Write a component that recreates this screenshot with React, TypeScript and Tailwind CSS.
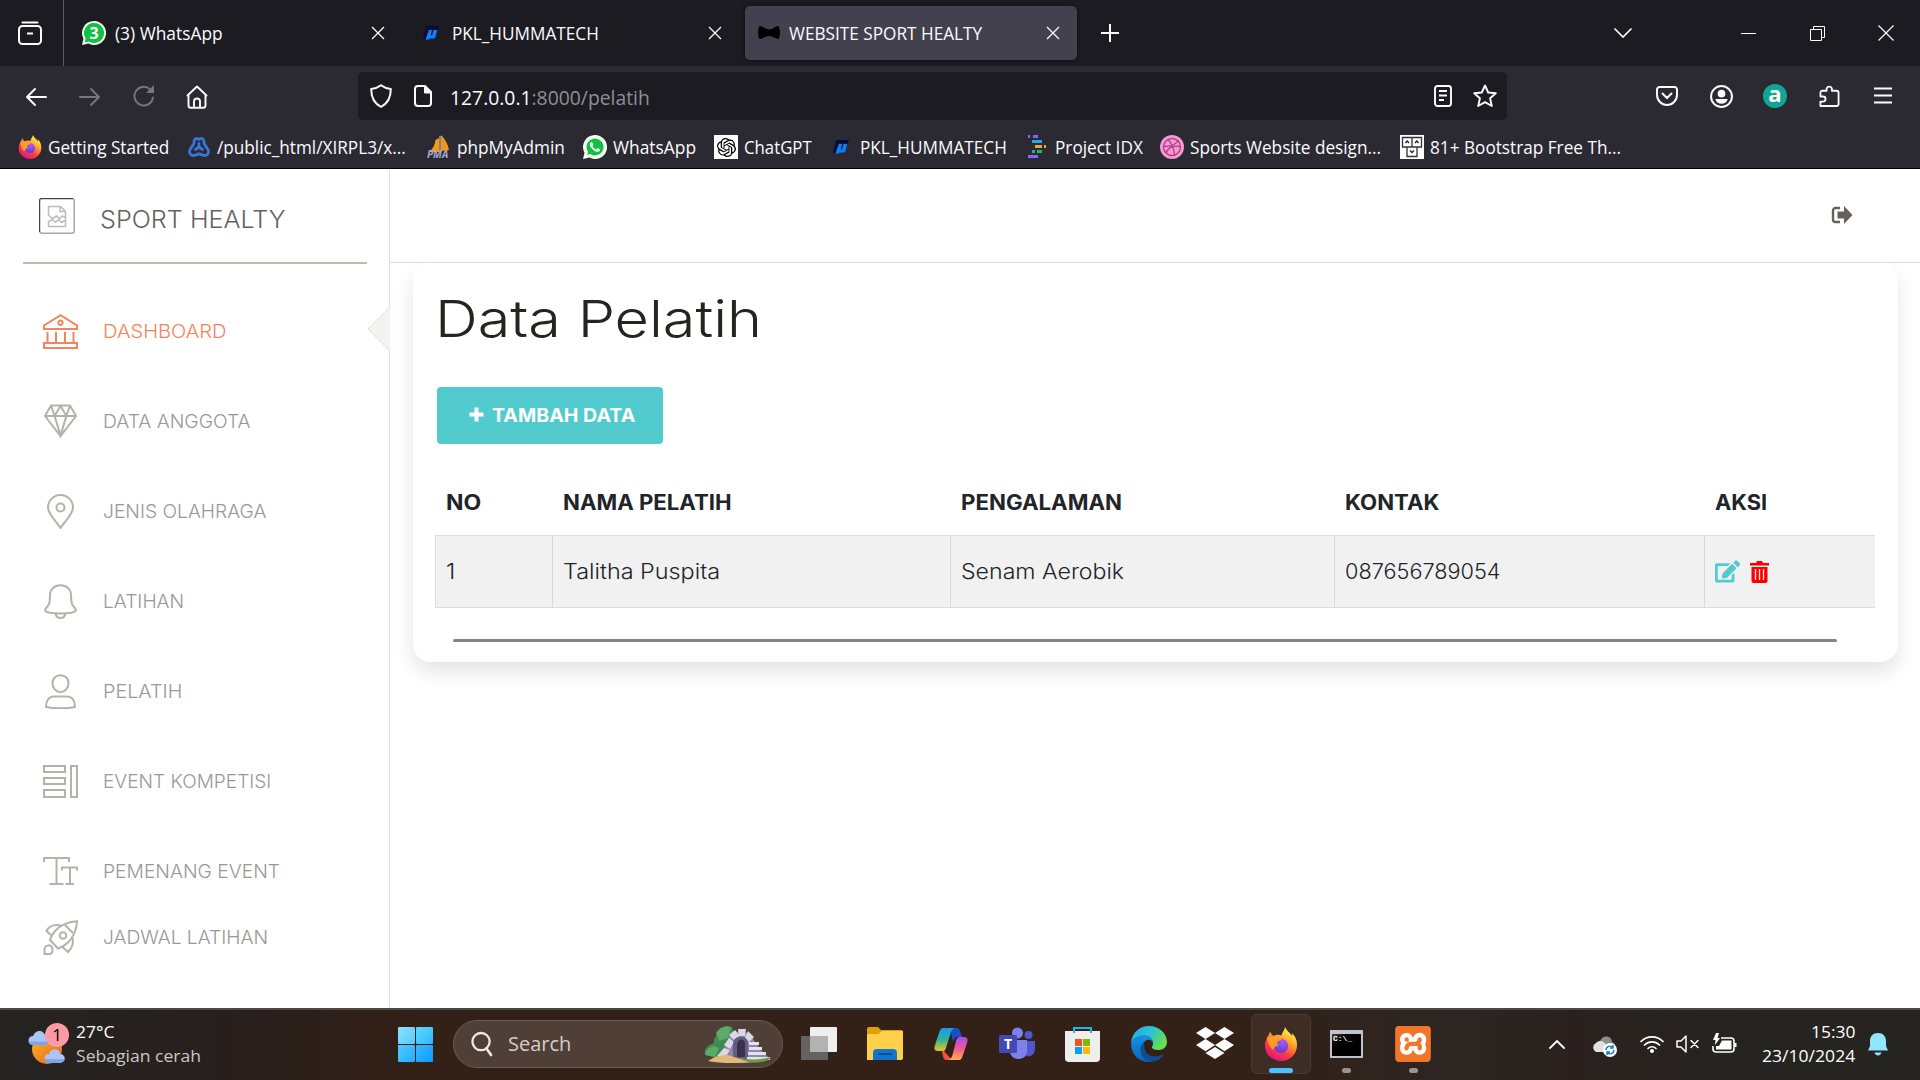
import React, { useLayoutEffect, useRef, useState } from "react";
import { FaEdit, FaDropbox, FaWhatsapp } from "react-icons/fa";
import { SiOpenai, SiXampp } from "react-icons/si";

/* Text that stretches or condenses to fill the width of its box. */
function Fit({ className = "", children }: { className?: string; children: React.ReactNode }) {
  const box = useRef<HTMLSpanElement>(null);
  const inner = useRef<HTMLSpanElement>(null);
  const [k, setK] = useState(1);
  useLayoutEffect(() => {
    if (box.current && inner.current) setK(box.current.clientWidth / inner.current.offsetWidth);
  }, []);
  return (
    <span ref={box} className={`block shrink-0 whitespace-nowrap ${className}`}>
      <span ref={inner} className="inline-block origin-left" style={{ transform: `scaleX(${k})` }}>
        {children}
      </span>
    </span>
  );
}

function Svg({ vb, className = "", children }: { vb: string; className?: string; children: React.ReactNode }) {
  return (
    <svg viewBox={vb} fill="none" className={`block shrink-0 ${className}`}>
      {children}
    </svg>
  );
}

const Cross = ({ className = "" }: { className?: string }) => (
  <Svg vb="0 0 14 14" className={`h-[14px] w-[14px] ${className}`}>
    <path d="M1 1l12 12M13 1L1 13" stroke="#fbfbfe" strokeWidth="1.3" />
  </Svg>
);

const WhatsAppBadge = ({ n, className = "" }: { n?: string; className?: string }) => (
  <span className={`relative block h-6 w-6 shrink-0 ${className}`}>
    <Svg vb="0 0 24 24" className="h-6 w-6">
      <path d="M12 0a12 12 0 1 1-5.6 22.6L0 24l1.5-6.2A12 12 0 0 1 12 0z" fill="#f4fff4" />
      <path d="M12 2a10 10 0 1 1-5.2 18.5L2.6 21.500l1.100-4A10 10 0 0 1 12 2z" fill="#12c143" />
    </Svg>
    {n ? (
      <span className="absolute inset-0 text-center text-[16px] font-bold leading-6 text-white">{n}</span>
    ) : (
      <FaWhatsapp className="absolute inset-0 h-6 w-6 scale-[0.98] text-white" />
    )}
  </span>
);

const Humma = ({ className = "" }: { className?: string }) => (
  <Svg vb="0 0 16 14" className={`h-[14px] w-4 ${className}`}>
    <path d="M3 0h13l-1.200 3.500H5L3 13H0z" fill="#050b3c" />
    <path d="M6 4h3L7.600 9.500h1.500L10.600 4h3.600l-1.600 6.500c-.4 1.500-1 2-2.500 2H6.500l-.3 1H2.500z" fill="#0a80ff" />
  </Svg>
);

const Firefox = ({ className = "" }: { className?: string }) => (
  <Svg vb="0 0 36 36" className={className}>
    <defs>
      <linearGradient id="fx" x1="28" y1="3" x2="9" y2="34" gradientUnits="userSpaceOnUse">
        <stop stopColor="#fff44f" />
        <stop offset=".35" stopColor="#ffa02b" />
        <stop offset=".65" stopColor="#ff4040" />
        <stop offset="1" stopColor="#e4117f" />
      </linearGradient>
      <radialGradient id="fxg" cx=".6" cy=".2" r=".9">
        <stop stopColor="#a758ff" />
        <stop offset="1" stopColor="#5b38c9" />
      </radialGradient>
    </defs>
    <path d="M22.500 0c-1 4-3.500 6-4 9-3-1-6-1-8 .5C8.500 8.500 7 7 7 5 5 6.500 4.500 8.500 4.500 10 2 13 1 16 1 19.500 1 28.500 8.500 36 18 36s17-7.500 17-17c0-5-2-10-5.500-12.500l.5 3.500C28 6 23.500 4 22.500 0z" fill="url(#fx)" />
    <circle cx="18" cy="20" r="7.500" fill="url(#fxg)" />
    <path d="M3 10c4 1 6-1.500 10 0 2.500 1 4.500 2 6 2.500-1 2.500-5 2-5 4.500 0 1.500 1.500 2.500 1 3-2 0-5 .5-4.500 4.500C5 22 4 15 3 10z" fill="#ff9a28" />
  </Svg>
);

/* ---------- browser chrome ---------- */

function TabStrip() {
  return (
    <div className="flex h-[66px] items-center bg-[#1c1b22] text-[18px] text-[#fbfbfe]">
      <Svg vb="0 0 24 24" className="ml-[18px] h-6 w-6">
        <path d="M4.500 1.500h15" stroke="#fbfbfe" strokeWidth="2" strokeLinecap="round" />
        <rect x="1" y="5" width="22" height="18" rx="3.500" stroke="#fbfbfe" strokeWidth="2" />
        <path d="M9 12.500h6" stroke="#fbfbfe" strokeWidth="2" />
      </Svg>
      <div className="ml-[21px] h-full w-px bg-[#5b5a61]" />
      <WhatsAppBadge n="3" className="ml-[18px]" />
      <Fit className="ml-[9px] w-[108px]">(3) WhatsApp</Fit>
      <Cross className="ml-[148px]" />
      <Humma className="ml-[38px]" />
      <Fit className="ml-[13px] w-[147px]">PKL_HUMMATECH</Fit>
      <Cross className="ml-[109px]" />
      <div className="ml-[23px] flex h-[54px] w-[332px] items-center rounded-[5px] bg-[#42414d] shadow-[0_0_4px_rgba(0,0,0,.6)]">
        <Svg vb="0 0 22 14" className="ml-[13px] h-[14px] w-[22px]">
          <path d="M1.500 0C5 0 7 3.500 11 3.500S17 0 20.500 0c2 4 2 9 0 13-3.500 0-5-3-9.500-3S5 13 1.500 13C-.5 9-.5 4 1.500 0z" fill="#000" />
        </Svg>
        <Fit className="ml-[9px] w-[193px]">WEBSITE SPORT HEALTY</Fit>
        <Cross className="ml-[64px]" />
      </div>
      <Svg vb="0 0 18 18" className="ml-[24px] h-[18px] w-[18px]">
        <path d="M9 0v18M0 9h18" stroke="#fbfbfe" strokeWidth="2" />
      </Svg>
      <Svg vb="0 0 18 10" className="ml-[495px] h-[10px] w-[18px]">
        <path d="M1 1l8 8 8-8" stroke="#fbfbfe" strokeWidth="1.700" strokeLinecap="round" />
      </Svg>
      <div className="ml-[109px] h-px w-[15px] bg-[#fbfbfe]" />
      <Svg vb="0 0 15 15" className="ml-[54px] h-[15px] w-[15px]">
        <path d="M.5 3.500h11v11H.5zM3.500 3.500v-3h11v11h-3" stroke="#fbfbfe" />
      </Svg>
      <Svg vb="0 0 16 16" className="ml-[53px] h-4 w-4">
        <path d="M.5.5l15 15M15.500.5l-15 15" stroke="#fbfbfe" strokeWidth="1.200" />
      </Svg>
    </div>
  );
}

function AddressRow() {
  return (
    <div className="flex h-[60px] items-center bg-[#2b2a33]">
      <Svg vb="0 0 22 20" className="ml-[25px] mt-px h-5 w-[22px]">
        <path d="M10 2l-8 8 8 8M2 10h19" stroke="#fbfbfe" strokeWidth="2" strokeLinecap="round" strokeLinejoin="round" />
      </Svg>
      <Svg vb="0 0 22 20" className="ml-[32px] mt-px h-5 w-[22px]">
        <path d="M12 2l8 8-8 8M20 10H1" stroke="#77767d" strokeWidth="2" strokeLinecap="round" strokeLinejoin="round" />
      </Svg>
      <Svg vb="0 0 22 22" className="ml-[32px] h-[22px] w-[22px]">
        <path d="M20 12.500A9.300 9.300 0 1 1 17 4.200" stroke="#77767d" strokeWidth="1.900" strokeLinecap="round" />
        <path d="M21 0v8h-8z" fill="#77767d" />
      </Svg>
      <Svg vb="0 0 24 24" className="ml-[30px] mt-px h-6 w-6">
        <path d="M2.500 10.500L12 1.500l9.500 9M3.500 10v10.500c0 1.500.8 2.300 2.300 2.300H9V16.500a3 3 0 0 1 6 0v6.300h3.200c1.500 0 2.300-.8 2.300-2.300V10M9 22.800h6" stroke="#fbfbfe" strokeWidth="1.900" strokeLinecap="round" strokeLinejoin="round" />
      </Svg>
      <div className="ml-[149px] flex h-12 w-[1149px] items-center rounded-[5px] bg-[#1c1b22]">
        <Svg vb="0 0 22 24" className="ml-[12px] h-6 w-[22px]">
          <path d="M11 1.200C8 3.500 5 4.500 1.200 5c0 9 3 14.500 9.800 17.800C17.800 19.500 20.800 14 20.800 5 17 4.500 14 3.500 11 1.200z" stroke="#fbfbfe" strokeWidth="2" strokeLinejoin="round" />
        </Svg>
        <Svg vb="0 0 18 22" className="ml-[22px] h-[22px] w-[18px]">
          <path d="M4 1h7l6 6v11a3 3 0 0 1-3 3H4a3 3 0 0 1-3-3V4a3 3 0 0 1 3-3z" stroke="#fbfbfe" strokeWidth="2" />
          <path d="M10.500 1v7H17z" fill="#fbfbfe" stroke="#fbfbfe" />
        </Svg>
        <Fit className="ml-[18px] mt-[3px] w-[200px] text-[20px] text-[#8f8e94]">
          <span className="text-[#fbfbfe]">127.0.0.1</span>:8000/pelatih
        </Fit>
        <Svg vb="0 0 18 22" className="ml-[784px] h-[22px] w-[18px]">
          <rect x="1" y="1" width="16" height="20" rx="2.500" stroke="#fbfbfe" strokeWidth="1.900" />
          <path d="M5 6h8M5 10.500h8M5 15h5" stroke="#fbfbfe" strokeWidth="1.900" />
        </Svg>
        <Svg vb="0 0 24 24" className="ml-[21px] h-6 w-6">
          <path d="M12 1.500l3.200 7 7.600.8-5.700 5 1.700 7.700L12 18.200 5.200 22l1.700-7.700-5.700-5 7.600-.8z" stroke="#fbfbfe" strokeWidth="1.900" strokeLinejoin="round" />
        </Svg>
      </div>
      <Svg vb="0 0 22 20" className="ml-[149px] h-5 w-[22px]">
        <path d="M3.500 1h15A2.500 2.500 0 0 1 21 3.500V9a10 10 0 0 1-20 0V3.500A2.500 2.500 0 0 1 3.500 1z" stroke="#fbfbfe" strokeWidth="2" />
        <path d="M6.500 7.500L11 12l4.500-4.500" stroke="#fbfbfe" strokeWidth="2" strokeLinecap="round" strokeLinejoin="round" />
      </Svg>
      <Svg vb="0 0 24 24" className="ml-[32px] mt-px h-[23px] w-[23px]">
        <circle cx="12" cy="12" r="10.900" stroke="#fbfbfe" strokeWidth="2.100" />
        <circle cx="12" cy="9" r="4" fill="#fbfbfe" />
        <path d="M5.500 14.500h13c-1 3.500-3.500 5-6.500 5s-5.500-1.500-6.500-5z" fill="#fbfbfe" />
      </Svg>
      <div className="ml-[30px] h-6 w-6 rounded-full bg-[#12a594] text-center text-[22px] font-bold leading-[19px] text-white">a</div>
      <Svg vb="0 0 22 24" className="ml-[32px] h-6 w-[21px]">
        <path d="M1.500 22.500v-4.700h2.700a2.600 2.600 0 0 0 0-5.300H1.500V8.500A2 2 0 0 1 3.500 6.500H8V4a3 3 0 0 1 5.500 0v2.500h5a2 2 0 0 1 2 2v12a2 2 0 0 1-2 2z" stroke="#fbfbfe" strokeWidth="1.900" strokeLinejoin="round" />
      </Svg>
      <Svg vb="0 0 18 17" className="ml-[34px] mb-px h-[17px] w-[18px]">
        <path d="M0 1.500h18M0 8.500h18M0 15.500h18" stroke="#fbfbfe" strokeWidth="2" />
      </Svg>
    </div>
  );
}

function Bookmarks() {
  return (
    <div className="flex h-[43px] items-center border-b border-black bg-[#2b2a33] text-[18px] text-[#fbfbfe]">
      <Firefox className="ml-[18px] h-6 w-6" />
      <Fit className="ml-[6px] w-[121px]">Getting Started</Fit>
      <Svg vb="0 0 22 22" className="ml-[19px] h-[22px] w-[22px]">
        <path d="M11 11V7.500M11 11l-3.500 2.500M11 11l3.500 2.500M8 2.500a3 3 0 0 1 3 1 3 3 0 0 1 3-1c2 .5 2 2 2 4.500 0 2 4.500 5.500 4.500 8.500 0 2.500-2 4-4 4-2.500 0-3-1.500-5.500-1.500S8 19.500 5.500 19.500c-2 0-4-1.500-4-4C1.500 12.500 6 9 6 7c0-2.500 0-4 2-4.500z" stroke="#3a75dd" strokeWidth="2.800" strokeLinejoin="round" strokeLinecap="round" />
      </Svg>
      <Fit className="ml-[7px] w-[189px]">/public_html/XIRPL3/x...</Fit>
      <span className="relative ml-[21px] block h-6 w-6 shrink-0">
        <Svg vb="0 0 24 24" className="h-6 w-6">
          <path d="M12 3v14H2C6 14 8 10 8.500 5z" fill="#f89c0e" />
          <path d="M14 0c4 4 7 9 8 15l-8 1z" fill="#f6921e" />
          <path d="M13 1v16" stroke="#d8d8d8" />
        </Svg>
        <span className="absolute -bottom-[3px] left-0 text-[10px] font-bold italic text-[#a6a9d6]">PMA</span>
      </span>
      <Fit className="ml-[6px] w-[108px]">phpMyAdmin</Fit>
      <WhatsAppBadge className="ml-[18px]" />
      <Fit className="ml-[6px] w-[83px]">WhatsApp</Fit>
      <div className="ml-[18px] flex h-6 w-6 items-center justify-center bg-white">
        <SiOpenai className="h-[19px] w-[19px] text-black" />
      </div>
      <Fit className="ml-[6px] w-[68px]">ChatGPT</Fit>
      <Humma className="ml-[21px]" />
      <Fit className="ml-[11px] w-[147px]">PKL_HUMMATECH</Fit>
      <Svg vb="0 0 18 26" className="ml-[21px] h-[26px] w-[18px]">
        <path d="M0 2.500h2M5 2.500h5M0 22.500h10" stroke="#8a63f5" strokeWidth="3" />
        <path d="M4 7.500h10" stroke="#25a5f5" strokeWidth="3" />
        <path d="M7 12.500h7M16 12.500h2" stroke="#f8a13b" strokeWidth="3" />
        <path d="M4 17.500h3M9 17.500h5" stroke="#1db57c" strokeWidth="3" />
      </Svg>
      <Fit className="ml-[9px] w-[88px]">Project IDX</Fit>
      <Svg vb="0 0 24 24" className="ml-[17px] h-6 w-6">
        <circle cx="12" cy="12" r="12" fill="#f49ad2" />
        <circle cx="12" cy="12" r="8.500" stroke="#b63c86" strokeWidth="1.300" />
        <path d="M8 4.500c4 4 6 9 6.500 15.500M3.500 11c6 1 12-1 15-6M6 18c2-5 7-8 14.500-6.500" stroke="#b63c86" strokeWidth="1.300" />
      </Svg>
      <Fit className="ml-[6px] w-[191px]">Sports Website design...</Fit>
      <Svg vb="0 0 24 24" className="ml-[19px] h-6 w-6">
        <path fill="#fff" d="M0 0h24v24H0z" />
        <path d="M2.500 2.500h9.500v9.500H2.500zM12 2.500h9.500v9.500H12zM7 12h10v9.500H7z" stroke="#333" strokeWidth="1.300" />
        <path d="M5.500 8l1.700-2L9 8M15 8l1.700-2 1.800 2M10 15.500l2 2 2-2" stroke="#222" strokeWidth="1.300" />
      </Svg>
      <Fit className="ml-[6px] w-[191px]">81+ Bootstrap Free Th...</Fit>
    </div>
  );
}

/* ---------- sidebar ---------- */

const icons = {
  bank: (
    <path d="M1 11.500L17.500 1.200 34 11.500V15H1zM1 29h33v5H1zM4.500 18v11M13 18v11M22 18v11M30.500 18v11M17.500 6.500a2.200 2.200 0 1 0 .01 0z" />
  ),
  gem: <path d="M8 1.500h19l6 10.500-15.500 20L2 12zM2 12h31M8 1.500l3.500 10 6 20 6-20 3.500-10M11.500 12l6-10 6 10" />,
  pin: (
    <>
      <path d="M17.500 34C13 27 5 20 5 13.500a12.500 12.500 0 0 1 25 0C30 20 22 27 17.500 34z" />
      <circle cx="17.500" cy="13.500" r="4" />
    </>
  ),
  bell: (
    <path d="M17.500 1.200c-6.500 0-10.500 4.500-10.500 10 0 8-1 10-4 13-2.500 3 1 4 4 4.500 7 1 14 1 21 0 3-.5 6.500-1.500 4-4.500-3-3-4-5-4-13 0-5.500-4-10-10.500-10zM12.500 29.500c1 6 9 6 10 0" />
  ),
  user: (
    <path d="M17.500 1.200c-5 0-8 3.500-8 8s3.500 9 8 9 8-4.500 8-9-3-8-8-8zM11 22.500h13c5 0 8 4 8 10.500-8 1.800-21 1.800-29 0 0-6.500 3-10.500 8-10.500z" />
  ),
  layout: <path d="M1 2h21v6H1zM1 14h21v6H1zM1 26h21v7H1zM28 2h6v31h-6z" />,
  type: <path d="M1 8V4h25v4M13.500 4v26M6.500 30h14M19 16.500v-3h15v3M27 14v16M22.500 30h8.500" />,
  rocket: (
    <>
      <path d="M34 1.200C24 2 17 5 12 11c-3 3.500-4 6-5 9l8 8.500c4-1.500 7-3 10-6 6-6 8.500-12 9-21.300zM22 5l8 8M18 5.500C11 4 6 6 3.500 11l4.500 4M19.500 27l5.500 5c4-4 6-8 4.500-14M1.500 34v-4.500c0-5 8-6 8 0s-4 4.500-8 4.500z" />
      <circle cx="20" cy="15.500" r="3.300" />
    </>
  ),
};

type IconName = keyof typeof icons;

const NavItem = ({ icon, label, width, active, last }: { icon: IconName; label: string; width: string; active?: boolean; last?: boolean }) => (
  <div className={`relative flex items-center ${last ? "-mt-[12px] h-[67px]" : "h-[90px]"} ${active ? "text-[#f2855b]" : "text-[#9a9894]"}`}>
    <Svg vb="0 0 35 35" className={`ml-[43px] h-[35px] w-[35px] ${active ? "text-[#f2855b]" : "text-[#b5b1ae]"}`}>
      <g stroke="currentColor" strokeWidth="2">{icons[icon]}</g>
    </Svg>
    <Fit className={`ml-[25px] mt-px text-[18.500px] font-light ${width}`}>{label}</Fit>
    {active && (
      <Svg vb="0 0 23 46" className="absolute right-[-1px] top-[20px] h-[46px] w-[23px]">
        <path d="M23 1L1 23l22 22" fill="#f4f3ef" stroke="#ddd" />
      </Svg>
    )}
  </div>
);

const Sidebar = () => (
  <aside className="w-[390px] shrink-0 border-r border-[#ddd] font-[Inter,sans-serif]">
    <div className="ml-[23px] mr-[22px] flex h-[95px] border-b-2 border-[#bdbbb5] text-[#66615b]">
      <Svg vb="0 0 36 36" className="ml-4 mt-[29px] h-9 w-9">
        <rect x=".75" y=".75" width="34.500" height="34.500" rx="2.500" stroke="#aaa" strokeWidth="1.500" />
        <path d="M.5 34V2Q.5.5 2 .5h32" stroke="#444" />
        <path d="M9.500 17V8.500h12l5 5V20l-3-2-3 2.500-3-2.500-4 2.500zM21 8.500v5h5.500M9.500 28.500v-5l4-2 3 3 3-3 3 3 4-2.500v6.500z" stroke="#bbb" strokeWidth="1.500" />
      </Svg>
      <Fit className="ml-[25px] mt-[32px] w-[186px] text-[24.500px] font-light leading-[37px]">SPORT HEALTY</Fit>
    </div>
    <nav className="pt-[22px]">
      <NavItem icon="bank" label="DASHBOARD" width="w-[124px]" active />
      <NavItem icon="gem" label="DATA ANGGOTA" width="w-[148px]" />
      <NavItem icon="pin" label="JENIS OLAHRAGA" width="w-[163px]" />
      <NavItem icon="bell" label="LATIHAN" width="w-[81px]" />
      <NavItem icon="user" label="PELATIH" width="w-[79px]" />
      <NavItem icon="layout" label="EVENT KOMPETISI" width="w-[168px]" />
      <NavItem icon="type" label="PEMENANG EVENT" width="w-[177px]" />
      <NavItem icon="rocket" label="JADWAL LATIHAN" width="w-[165px]" last />
    </nav>
  </aside>
);

/* ---------- content ---------- */

const Content = () => (
  <main className="flex-1 font-[Inter,sans-serif] text-[#212529]">
    <div className="flex h-[94px] justify-end border-b border-[#ddd]">
      <Svg vb="0 0 22 18" className="mr-[67px] mt-[37px] h-[18px] w-[22px] text-[#66615b]">
        <path d="M9 2H4.500A2.500 2.500 0 0 0 2 4.500v9A2.500 2.500 0 0 0 4.500 16H9" stroke="currentColor" strokeWidth="2.400" />
        <path d="M6.500 5.500H13V0l8.500 9-8.500 9v-5.500H6.500z" fill="currentColor" />
      </Svg>
    </div>
    <section className="ml-[23px] h-[399px] w-[1485px] rounded-[18px] bg-white pt-px shadow-[0_10px_20px_rgba(0,0,0,.11)] [clip-path:inset(0_-40px_-40px_-40px)]">
      <Fit className="ml-[22px] mt-[20px] w-[327px] text-[51px] font-light leading-[70px] text-[#252422]">Data Pelatih</Fit>
      <button className="ml-[24px] mt-[33px] flex h-[57px] w-[226px] items-center rounded-[4px] bg-[#51cbce] text-[18.500px] font-bold text-white">
        <Svg vb="0 0 15 15" className="ml-[32px] mb-[2px] h-[15px] w-[15px]">
          <path d="M7.500.5v14M.5 7.500h14" stroke="#fff" strokeWidth="4" />
        </Svg>
        <Fit className="ml-[4px] w-[143px]">TAMBAH DATA</Fit>
      </button>
      <div className="ml-[22px] mt-[27px] w-[1440px] text-[21px]">
        <div className="grid h-[65px] grid-cols-[117px_398px_384px_370px_160px] items-center pl-[11px] font-bold leading-[30px] -mt-px">
          <Fit className="w-[35px]">NO</Fit>
          <Fit className="w-[169px]">NAMA PELATIH</Fit>
          <Fit className="w-[161px]">PENGALAMAN</Fit>
          <Fit className="w-[94px]">KONTAK</Fit>
          <Fit className="w-[52px]">AKSI</Fit>
        </div>
        <div className="grid h-[73px] grid-cols-[116px_398px_384px_370px_171px] border-y border-l border-[#dcdee0] bg-[#f1f1f1] font-[350] *:flex *:items-center *:pl-[10px] [&>*+*]:border-l [&>*+*]:border-[#d6d8db]">
          <div><Fit className="w-[9px]">1</Fit></div>
          <div><Fit className="w-[157px]">Talitha Puspita</Fit></div>
          <div><Fit className="w-[163px]">Senam Aerobik</Fit></div>
          <div><Fit className="w-[156px]">087656789054</Fit></div>
          <div>
            <FaEdit className="h-[23px] w-[25px] text-[#51cbce]" />
            <Svg vb="0 0 19 22" className="ml-[10px] h-[22px] w-[19px]">
              <path d="M0 2h6l1-2h5l1 2h6v2.500H0zM1.500 6h16v14a2 2 0 0 1-2 2h-12a2 2 0 0 1-2-2z" fill="#f00" />
              <path d="M5.500 8v11M9.500 8v11M13.500 8v11" stroke="#f1f1f1" strokeWidth="1.300" />
            </Svg>
          </div>
        </div>
      </div>
      <div className="ml-[40px] mt-[31px] h-[3px] w-[1384px] rounded-sm bg-[#848484]" />
    </section>
  </main>
);

/* ---------- taskbar ---------- */

const Cloud = ({ className = "" }: { className?: string }) => (
  <Svg vb="0 0 22 14" className={className}>
    <path d="M5 14a4.500 4.500 0 0 1 0-9C6 2 8.500 0 11.500 0s5 2 5.500 5a4.500 4.500 0 0 1 .5 9z" fill="#a9c4f7" />
    <path d="M5 14a4.500 4.500 0 0 1-4.500-3.500h21A4.500 4.500 0 0 1 17.500 14z" fill="#7da3ea" />
  </Svg>
);

const Taskbar = () => (
  <footer className="flex h-[72px] items-center border-t-2 border-[#4d4848] bg-[linear-gradient(90deg,#252422_0%,#281f1d_12%,#332016_22%,#332117_64%,#2c2522_76%,#2a211e_82%,#252421_92%)] pb-[2px] text-[17px] text-white">
    <div className="relative ml-[28px] h-[42px] w-[42px] shrink-0">
      <div className="absolute left-[4px] top-[11px] h-[30px] w-[30px] rounded-full bg-linear-to-br from-[#fbb230] to-[#e8650a]" />
      <Cloud className="absolute left-0 top-[8px] h-[14px] w-[22px]" />
      <Cloud className="absolute left-[16px] top-[26px] h-[14px] w-[21px]" />
      <div className="absolute left-[17px] top-0 h-[24px] w-[24px] rounded-full bg-[#ff99a4] text-center leading-[24px] text-black">1</div>
    </div>
    <div className="ml-[6px] leading-6">
      <Fit className="w-[38px]">27°C</Fit>
      <Fit className="w-[125px] text-[#c9c7c6]">Sebagian cerah</Fit>
    </div>
    <div className="ml-[197px] grid h-[35px] w-[35px] shrink-0 grid-cols-2 gap-px *:rounded-[1px]">
      <i className="bg-linear-to-br from-[#8de0ff] to-[#4fccff]" />
      <i className="bg-linear-to-br from-[#5fd6ff] to-[#28b8ff]" />
      <i className="bg-linear-to-br from-[#4fccff] to-[#22abff]" />
      <i className="bg-linear-to-br from-[#35b9ff] to-[#0d98ff]" />
    </div>
    <div className="ml-[20px] flex h-[48px] w-[330px] shrink-0 items-center rounded-full border border-[#6b5a51] bg-[#4f3f37]">
      <Svg vb="0 0 23 27" className="ml-[17px] h-[26px] w-[22px]">
        <circle cx="10.500" cy="11" r="9" stroke="#eceae9" strokeWidth="2.400" />
        <path d="M16 18l5 7" stroke="#eceae9" strokeWidth="2.800" strokeLinecap="round" />
      </Svg>
      <Fit className="ml-[15px] w-[63px] text-[20px] text-[#d3cecb]">Search</Fit>
      <Svg vb="0 0 68 38" className="ml-[133px] h-[38px] w-[68px]">
        <path d="M2 30c-4-5 3-11 8-12-1-6 3-8 6-9 0-6 6-10 12-7l2 8-14 24z" fill="#3f8a50" />
        <path d="M12 8c4-7 11-8 15-5l-3 10-9 3zM1 30c0-7 8-11 14-7l-4 9z" fill="#5da968" />
        <path d="M12 34c6-6 10-14 12-20 3-9 18-11 24-2 3 6 5 6 8 12l10 10c-10 5-40 5-54 0z" fill="#8b88aa" />
        <path d="M13 31l7-8 6 2-5 8zM20 20l5-7 5 4-4 7zM25 10l6-5 5 6-5 5zM34 4h8l-1 7h-6zM44 6l6 6-5 5-4-5z" fill="#dcd7e4" />
        <path d="M29 34V19c0-10 15-10 15 0v15z" fill="#625d82" />
        <path d="M33 32V19c1-6 8-6 8 0v13z" fill="#3a3148" />
        <path d="M4 36c8-6 19-8 26-4l16 5c-15 2-32 1-42-1z" fill="#dfba79" />
        <path d="M45 17h10v3H45zM45 22h13v3H45zM44 27h18v3H44zM43 32h23v3H43z" fill="#e5e0ed" />
        <path d="M36 33c8 2 20 2 31-1-1 6-24 8-31 1z" fill="#6f9a42" />
      </Svg>
    </div>
    <Svg vb="0 0 36 34" className="ml-[18px] h-[34px] w-9">
      <rect y="9" width="27" height="24" rx="1" fill="#656362" />
      <rect x="9" width="27" height="25" rx="1" fill="#efefef" />
      <path d="M9 9h18v16H9z" fill="#b3b2b2" />
    </Svg>
    <Svg vb="0 0 36 34" className="ml-[30px] h-[34px] w-9">
      <path d="M0 2a2 2 0 0 1 2-2h9l3 3h20a2 2 0 0 1 2 2v6H0z" fill="#e0a008" />
      <path d="M0 7h11l4-3h21v27a2 2 0 0 1-2 2H0z" fill="#ffd04a" />
      <path d="M6 33v-7a4 4 0 0 1 4-4h16a4 4 0 0 1 4 4v7z" fill="#1274cc" />
      <path d="M11 27h14" stroke="#0b4d94" strokeWidth="2" />
    </Svg>
    <Svg vb="0 0 34 34" className="ml-[31px] h-[34px] w-[34px]">
      <defs>
        <linearGradient id="cp1" x1="0" y1="0" x2="0" y2="1">
          <stop stopColor="#1c9cf0" /><stop offset=".5" stopColor="#2db2a0" /><stop offset="1" stopColor="#e8c520" />
        </linearGradient>
        <linearGradient id="cp2" x1="0" y1="0" x2="0" y2="1">
          <stop stopColor="#a64df0" /><stop offset=".5" stopColor="#ee5a91" /><stop offset="1" stopColor="#ffb04a" />
        </linearGradient>
      </defs>
      <path d="M16 1h7c2 0 3 2 4 6l1 3h-4c-3 0-4 2-5 5z" fill="#1750c8" />
      <path d="M10 24l8 9h-6c-2 0-3-2-4-9z" fill="#f2503a" />
      <path d="M9 1h12c-3 1-4 3-5 7l-4 13c-1 3-2 3-4 3H4c-4 0-4-3-3-6L5 6c1-3 2-5 4-5z" fill="url(#cp1)" />
      <path d="M25 33H14c3-1 4-3 5-7l3-12c1-3 2-4 4-4h4c4 0 4 3 3 6l-4 12c-1 3-2 5-4 5z" fill="url(#cp2)" />
    </Svg>
    <div className="relative ml-[31px] h-[34px] w-9 shrink-0">
      <Svg vb="0 0 36 34" className="h-[34px] w-9">
        <circle cx="29.500" cy="8" r="4" fill="#5059c9" />
        <path d="M24 14h12v9a7 7 0 0 1-9 6z" fill="#4f58ca" />
        <circle cx="18.500" cy="6" r="5.500" fill="#7b83eb" />
        <path d="M11 13h17v11c0 5-4 8-8.500 8S11 29 11 24z" fill="#7b83eb" />
        <rect y="8" width="18" height="18" rx="1.500" fill="#4249b4" />
      </Svg>
      <span className="absolute left-0 top-[8px] w-[18px] text-center text-[14px] font-bold leading-[18px]">T</span>
    </div>
    <Svg vb="0 0 35 35" className="ml-[30px] h-[35px] w-[35px]">
      <path d="M9 7V1h17v6" stroke="#21b5ee" strokeWidth="2" />
      <path d="M0 4h35v27a4 4 0 0 1-4 4H4a4 4 0 0 1-4-4z" fill="#eeeeed" />
      <path d="M9 6V4M26 6V4" stroke="#21b5ee" strokeWidth="2" />
      <path d="M10 12h7v7h-7z" fill="#f25022" /><path d="M18 12h7v7h-7z" fill="#7fba00" />
      <path d="M10 20h7v7h-7z" fill="#00a4ef" /><path d="M18 20h7v7h-7z" fill="#ffb900" />
    </Svg>
    <Svg vb="0 0 36 36" className="ml-[31px] h-9 w-9">
      <defs>
        <linearGradient id="ed1" x1="0" y1="0" x2="1" y2=".5">
          <stop stopColor="#24a8ee" /><stop offset=".55" stopColor="#2bc3d2" /><stop offset="1" stopColor="#66e04c" />
        </linearGradient>
        <linearGradient id="ed2" x1="0" y1="0" x2="0" y2="1">
          <stop stopColor="#1592e2" /><stop offset="1" stopColor="#0c63b8" />
        </linearGradient>
      </defs>
      <path d="M0 17C1 6 9 0 18 0c10 0 18 7 18 16 0 5-4 8-8 8-5 0-7-1-7-3 0-1 1-1 1-4 0-4-4-7-9-7C7 10 2 13 0 17z" fill="url(#ed1)" />
      <path d="M0 17c2-5 7-8 13-8 5 0 9 3 9 8-1-3-4-4-6-3-4 2-5 6-3 11 2 6 7 9 12 8-2 2-5 3-7 3C7 36 0 28 0 17z" fill="url(#ed2)" />
      <path d="M13 16c-6 5-4 14 2 18 7 4 15 0 18-6-7 4-17 3-19-4-1-3-1-6-1-8z" fill="#114d92" />
    </Svg>
    <FaDropbox className="-mt-[2px] ml-[29px] h-[38px] w-[38px] shrink-0" />
    <div className="ml-[17px] flex h-[60px] w-[60px] shrink-0 flex-col items-center rounded-[6px] border border-[#4a3a32] bg-[#3d2d25]">
      <Firefox className="mt-[11px] h-9 w-[34px]" />
      <div className="mt-[6px] h-[5px] w-6 shrink-0 rounded-full bg-[#4cc2ff]" />
    </div>
    <div className="relative ml-[19px] h-[28px] w-[33px] shrink-0 border-2 border-t-4 border-[#bfc3c9] bg-linear-to-br from-[#444] via-black via-40% to-black">
      <div className="absolute left-[1px] top-[1px] font-['Liberation_Mono',monospace] text-[8px] font-bold leading-[8px]">C:\_</div>
      <div className="absolute left-[10px] top-[34px] h-[5px] w-[9px] rounded-full bg-[#9a938f]" />
    </div>
    <div className="relative ml-[32px] h-9 w-9 shrink-0">
      <div className="absolute inset-[4px] bg-white" />
      <SiXampp className="absolute inset-0 h-9 w-9 text-[#f2762a]" />
      <div className="absolute left-[14px] top-[42px] h-[5px] w-[9px] rounded-full bg-[#9a938f]" />
    </div>
    <Svg vb="0 0 16 10" className="ml-[118px] h-[10px] w-4">
      <path d="M1 9l7-7 7 7" stroke="#fff" strokeWidth="1.800" strokeLinecap="round" />
    </Svg>
    <Svg vb="0 0 26 22" className="ml-[27px] mt-1 h-[22px] w-[26px]">
      <path d="M8 6c3-7 12-5 12 1 4 1 4 6 1 8H8z" fill="#8e8c8b" />
      <path d="M4 17a5 5 0 0 1 0-9c4-4 9-1 10 2l3 7z" fill="#e1e1e1" />
      <circle cx="18" cy="15" r="7" fill="#fff" />
      <path d="M14 15a4 4 0 0 1 7-2.500M22 15a4 4 0 0 1-7 2.500M21 10v3h-3M15 20v-3h3" stroke="#147bd1" strokeWidth="1.400" />
    </Svg>
    <Svg vb="0 0 24 18" className="ml-[22px] h-[18px] w-6">
      <path d="M1 6.500a15.500 15.500 0 0 1 22 0M4.500 10a10.500 10.500 0 0 1 15 0M8 13.500a5.500 5.500 0 0 1 8 0" stroke="#fff" strokeWidth="1.700" strokeLinecap="round" />
      <circle cx="12" cy="16" r="2" fill="#fff" />
    </Svg>
    <Svg vb="0 0 24 18" className="ml-[12px] h-[18px] w-6">
      <path d="M1 6h4l5-5v16l-5-5H1z" stroke="#fff" strokeWidth="1.500" strokeLinejoin="round" />
      <path d="M15 5.500l7 7M22 5.500l-7 7" stroke="#fff" strokeWidth="1.500" strokeLinecap="round" />
    </Svg>
    <Svg vb="0 0 25 20" className="ml-[12px] mb-[3px] h-5 w-[25px]">
      <path d="M9 5h10a3 3 0 0 1 3 3v8a3 3 0 0 1-3 3H4a3 3 0 0 1-3-3v-3" stroke="#fff" strokeWidth="1.600" />
      <path d="M10 7.500h9.500v9H4V13h3zM22.500 10h2v4h-2z" fill="#fff" />
      <path d="M4 0L1 7h2.500L3 12l5-7H5.500L7 0z" fill="#fff" />
    </Svg>
    <div className="ml-[25px] flex w-[93px] shrink-0 flex-col items-end leading-6">
      <Fit className="w-[44px]">15:30</Fit>
      <Fit className="w-[93px]">23/10/2024</Fit>
    </div>
    <Svg vb="0 0 20 23" className="ml-[13px] h-[23px] w-5">
      <path d="M10 0c5 0 8 3.500 8 8v5l2 4.500H0L2 13V8c0-4.500 3-8 8-8zM6.500 19.500h7c-1 4-6 4-7 0z" fill="#8fe6ff" />
    </Svg>
  </footer>
);

export default function App() {
  return (
    <div className="flex h-[1080px] w-[1920px] flex-col overflow-hidden bg-white font-['Open_Sans','Noto_Sans',sans-serif]">
      <TabStrip />
      <AddressRow />
      <Bookmarks />
      <div className="flex h-[839px] shrink-0">
        <Sidebar />
        <Content />
      </div>
      <Taskbar />
    </div>
  );
}
